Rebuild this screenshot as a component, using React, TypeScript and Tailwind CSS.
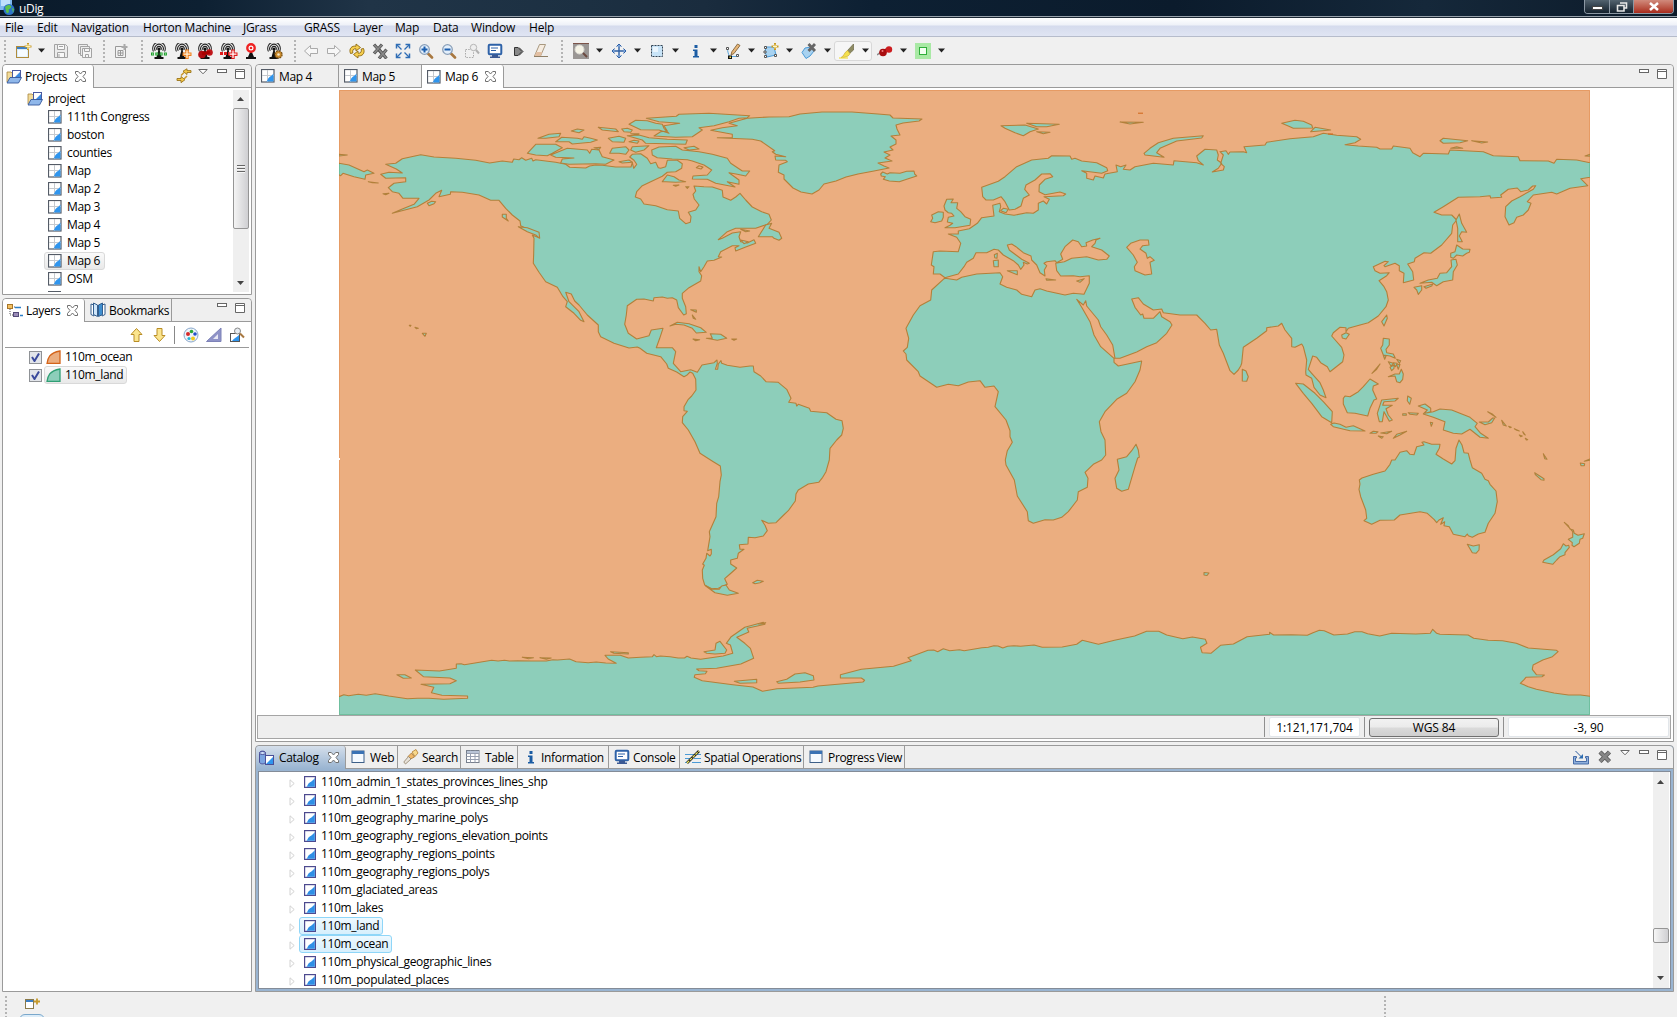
import React from "react";

/* ------------------------------------------------------------------ */
/* World map data: outlines digitised on local sheets                  */
/* ------------------------------------------------------------------ */

type SheetId = "N" | "S" | "E" | "A" | "O" | "F" | "T" | "P";
type Part = [SheetId, string];

const sheets: Record<SheetId, { ox: number; oy: number; sx: number; sy: number }> = {
  N: { ox: 339, oy: 85, sx: 3, sy: 3 },
  S: { ox: 640, oy: 340, sx: 3, sy: 3 },
  E: { ox: 890, oy: 100, sx: 3, sy: 3 },
  A: { ox: 1240, oy: 100, sx: 3, sy: 3 },
  O: { ox: 1240, oy: 330, sx: 3, sy: 3 },
  F: { ox: 880, oy: 260, sx: 3, sy: 3 },
  T: { ox: 339, oy: 590, sx: 1.2444, sy: 3 },
  P: { ox: 0, oy: 0, sx: 1, sy: 1 },
};

const toPath = (parts: Part[]) => {
  const out: string[] = [];
  for (const [id, pts] of parts) {
    const s = sheets[id];
    for (const p of pts.trim().split(/\s+/)) {
      const [x, y] = p.split(",").map(Number);
      out.push(`${(s.ox + x / s.sx).toFixed(1)} ${(s.oy + y / s.sy).toFixed(1)}`);
    }
  }
  return "M" + out.join("L") + "Z";
};

const continents: Part[][] = [
  [
    ["N", "125,268 150,262 190,264 172,252 140,238 170,235 190,221 245,209 285,216 350,220 410,226 452,234 490,228 520,232 524,222 540,224 548,218 560,226 578,220 582,228 590,224 650,232 680,238 692,247 740,249 752,243 770,240 790,241 830,246 876,246 880,232 884,250 893,238 885,226 872,216 880,208 905,206 925,220 935,236 950,232 958,248 965,250 980,245 985,226 1015,226 1030,236 1028,250 1010,260 985,262 970,274 935,290 910,302 893,320 889,336 905,342 915,357 950,362 985,374 1018,378 1022,400 1040,416 1054,412 1056,395 1048,382 1070,375 1080,360 1066,342 1062,328 1070,318 1065,303 1095,305 1120,306 1150,316 1152,336 1175,346 1190,336 1203,325 1220,345 1240,366 1268,380 1290,388 1297,405 1285,418 1250,430 1190,430 1165,440 1138,464 1150,460 1180,444 1205,440 1200,455 1205,470 1225,474 1245,464 1250,475 1220,486 1190,498 1188,488 1200,482 1180,482 1145,500 1138,515 1148,516 1125,526 1105,528 1095,545 1085,560 1080,545 1080,560 1088,572 1085,588 1050,608 1030,625 1030,640 1040,665 1042,686 1034,690 1018,668 1013,645 1000,638 985,640 970,636 945,638 943,648 915,642 893,643 865,662 862,690 857,718 868,745 893,762 930,752 937,735 972,730 962,760 952,788 1000,788 1010,800 1003,835 1025,860 1055,854"],
    ["S", "172,97 186,75 222,68 231,60 232,70 226,88 233,88 235,72 243,62 245,70 262,76 300,82 330,78 340,78 342,95 362,108 378,125 415,127 440,148 453,175 446,187 468,190 470,198 475,193 508,205 512,214 560,218 588,238 606,242 610,265 605,285 590,300 570,325 568,360 558,395 548,412 536,427 505,432 475,450 468,462 466,483 445,512 428,528 408,548 385,550 365,541 375,556 382,572 370,588 345,593 325,592 324,612 298,614 300,628 312,628 295,640 292,655 272,660 272,672 290,684 270,702 254,716 262,733 235,745 215,746 194,735 188,715 187,690 193,676 188,672 198,655 200,640 210,648 214,642 214,628 203,632 210,590 208,575 228,530 230,490 236,470 240,425 244,405 241,378 220,365 180,340 165,305 145,270 127,248 128,230 142,214 132,212 132,200 145,178 155,168 168,150 167,118 158,100 150,96 140,106 132,110 110,96 85,85 80,72 62,50 20,40 0,25"],
    ["N", "895,786 870,789 825,775 785,755 778,740 778,720 745,690 720,660 707,648 697,627 680,622 690,650 720,680 735,710 725,706 705,685 680,665 685,650 672,635 655,607 620,590 600,562 583,535 584,505 585,460 580,450 600,458 598,445 575,437 545,422 543,408 520,390 500,370 480,346 455,346 420,330 370,322 335,320 334,328 300,335 308,316 290,325 270,345 235,365 160,385 190,372 225,358 240,340 192,340 180,325 160,320 148,308 165,295 200,290 200,278 140,280"],
  ],
  [
    ["E", "165,533 150,522 130,522 132,500 124,495 130,455 150,453 205,455 212,430 200,412 175,402 205,402 205,393 238,386 262,370 275,353 312,348 308,316 330,310 332,320 328,335 345,342 372,346 410,338 430,340 445,330 445,310 460,303 470,312 478,298 462,290 520,287 527,282 510,276 465,284 447,275 448,255 465,238 488,230 480,221 455,222 435,240 408,255 404,268 418,285 400,295 393,318 375,328 358,330 345,305 333,290 310,300 288,300 278,290 275,262 325,244 345,230 380,200 425,180 475,175 485,167 540,168 545,178 555,175 575,183 620,188 650,203 653,212 635,220 575,212 590,220 590,235 610,240 615,228 640,234 645,222 682,215 678,195 692,200 708,195 700,208 720,210 735,200 790,190 850,195 852,182 920,188 940,195 925,182 920,168 945,148 980,150 985,165 982,180 995,190 985,205 967,216 1000,210 1003,200 992,190 1000,165 990,155 1008,152 1015,163 1020,156 1060,155 1070,158 1062,140 1125,135 1130,127 1200,116"],
    ["A", "220,110 250,100 290,106 350,110 362,118 345,128 315,134 355,138 410,142 420,147 455,147 460,138 510,145 518,158 540,170 550,160 625,162 630,150 730,155 760,167 835,170 840,182 925,183 942,190 950,178 1010,180 1050,188 1050,232 1022,236 1043,257 990,265 950,282 935,277 880,285 862,305 873,310 865,330 850,345 830,352 822,368 807,375 795,350 797,320 815,303 840,290 880,268 887,257 878,258 865,270 842,275 832,264 805,268 782,285 785,292 752,294 750,287 720,290 655,292 610,320 582,337 605,345 635,345 650,360 638,375 635,400 605,435 572,460 552,458 525,475 523,485 503,492 518,515 521,540 490,548 492,520 478,512 478,497 465,490 435,500 432,497 445,485 435,484 400,500 405,512 420,520 448,518 440,527 417,542 432,560 440,575 445,600 438,620 415,648 385,668 360,675 325,685 318,695 318,683 300,682 280,698 275,708 305,742 312,765 308,785 270,815 262,800 242,788 230,772 218,768 205,808 215,820 240,848 250,870 258,893 240,885 222,862 215,835 198,825 197,815 200,780 190,740 185,732 165,742 155,740 155,715 135,690 125,670 115,678 80,683 80,692 50,715 10,742 5,790"],
    ["E", "1052,798 1045,810 1032,823 1020,812 1000,760 988,735 980,688 962,690 945,670 920,645 870,645 820,638 815,627 790,630 760,612 745,593 725,597 735,622 752,645 758,642 762,655 790,655 810,635 815,650 840,665 846,675 830,700 800,728 770,740 740,756 690,775 675,775 668,735 650,705 632,680 625,660 590,618 587,602 580,615 560,598 575,622 600,665 612,705 632,740 672,775 672,787 685,798 755,783 750,810 735,845 710,880 680,898"],
    ["F", "675,455 658,485 663,515 675,540 677,585 665,600 640,613 615,637 624,655 622,682 595,695 592,720 565,755 545,772 520,780 495,779 460,790 445,782 442,755 412,708 403,660 378,615 376,600 382,572 397,547 390,530 390,512 378,480 345,440 355,395 342,378 315,382 300,362 265,366 235,377 205,373 170,382 120,348 115,335 80,300 78,282 70,273 82,262 86,235 78,205 100,165 120,137 152,120 155,90 190,58"],
    ["E", "165,535 200,540 215,532 260,522 330,518 338,530 330,552 350,562 380,570 395,583 425,590 435,570 450,566 470,573 525,585 550,580 582,583 598,550 598,527 570,530 550,527 512,528 500,512 497,490 523,485 545,475 590,470 625,480 650,478 658,468 635,450 605,440 615,430 618,420 630,415 608,420 588,428 590,438 575,440 565,425 548,420 525,440 512,462 518,478 500,488 495,482 470,485 462,490 470,497 463,510 465,528 450,518 440,495 425,480 423,468 400,458 378,440 365,432 352,435 358,450 375,463 395,478 418,490 412,492 400,487 402,495 392,508 385,495 370,482 340,465 325,450 312,448 290,458 258,458 250,475 230,487 222,500 205,522 175,530"],
  ],
  [
    ["T", "0,320 6,314 12,317 24,313 34,316 45,311 62,318 85,326 98,325 112,325 130,328 160,325 160,318 128,316 115,308 118,292 102,283 138,281 146,272 138,264 105,260 95,240 125,243 146,235 146,222 152,221 156,224 190,211 198,213 206,211 212,213 222,212 240,213 258,213 266,209 272,210 287,207 295,215 310,218 320,216 332,219 345,220 335,207 331,196 350,196 360,204 375,202 390,200 392,194 395,200 400,198 412,200 422,204 430,204 433,199 438,204 450,208 478,198 490,190 487,165 482,160 488,140 505,112 528,97 530,103 508,115 510,126 495,142 505,160 512,175 516,205 500,222 470,235 445,237 448,242 458,244 456,251 443,254 442,262 452,272 490,284 515,291 527,304 545,296 590,292 596,288 652,276 654,271 650,264 624,264 624,254 650,238 690,229 712,212 708,203 733,181 740,180 745,185 752,176 760,182 772,179 778,182 800,173 808,172 815,167 820,168 826,174 832,169 840,167 848,169 865,165 875,172 900,171 918,163 925,151 945,163 965,151 990,138 1005,124 1020,124 1030,135 1050,146 1062,141 1078,148 1080,160 1072,172 1074,188 1085,190 1097,166 1113,162 1130,140 1158,133 1158,127 1163,135 1185,134 1205,136 1212,128 1220,121 1226,122 1238,135 1255,132 1264,125 1273,125 1280,131 1295,138 1310,130 1340,132 1358,130 1361,118 1366,130 1370,133 1405,135 1412,145 1430,151 1448,152 1465,160 1480,174 1515,181 1517,185 1510,200 1498,210 1486,225 1485,238 1490,254 1500,255 1497,260 1477,262 1475,268 1470,280 1480,290 1490,298 1512,309 1530,315 1545,315 1557,319 1557,378 0,378"],
  ],
];

const islands: Part[][] = [
  [["N", "1115,136 1150,128 1195,122 1170,115 1225,100 1290,96 1350,95"], ["P", "800,114 822,112 852,112 878,114 890,115 893,118 922,119 919,121 903,123 896,125 897,129 900,135 891,136 896,140 896,144 890,147 893,150 884,152 890,155 885,158 892,161 878,163 884,166 889,168 874,171 858,174 846,177 836,181 824,184 819,190 812,194 801,192 793,188 789,184"], ["N", "1335,282 1335,270 1318,262 1320,240 1345,230 1340,226 1310,225 1308,213 1340,215 1310,208 1300,200 1307,197 1265,168 1240,163 1135,158 1180,158 1180,148"]],
  [["E", "-28,222 -22,216 -8,222 0,218 30,220 50,214 72,213 74,222 80,228 50,238 28,245 -2,243 -20,238 -14,230 -26,228"]],
  [["N", "538,425 565,428 600,442 602,460 590,450 565,440"]],
  [["N", "490,388 502,388 502,400 508,408 490,396"]],
  [["N", "265,355 278,349 290,350 285,356 270,362"]],
  [["N", "0,208 25,210 0,213"]],
  [["N", "88,290 118,294 100,293"]],
  [["N", "132,326 150,325 140,329"]],
  [["N", "0,235 30,240 75,260 85,255 105,265 80,270 78,283 45,275 12,265 5,272 0,270"]],
  [["N", "1258,455 1280,420 1298,415 1290,430 1320,442 1328,460 1320,466 1305,460 1300,455"]],
  [["N", "1205,433 1232,438 1220,440"]],
  [["N", "1205,465 1228,470 1215,476"]],
  [["N", "565,205 590,178 650,178 670,188 640,205 625,212 590,210"]],
  [["N", "635,210 685,190 745,195 752,205 758,193 780,195 790,215 825,225 800,238 770,236 690,238 665,234 670,222 705,219 650,217"]],
  [["N", "597,160 630,148 665,145 660,155 620,160"]],
  [["N", "650,170 668,157 715,160 730,163 735,155 755,160 775,165 755,172 700,177 690,170"]],
  [["N", "697,138 715,132 735,135 720,143"]],
  [["N", "808,160 840,154 860,160 855,172 820,170"]],
  [["N", "778,127 830,132 838,140 790,135"]],
  [["N", "848,132 865,130 880,135 875,142 855,140"]],
  [["N", "820,190 860,185 870,195 860,208 840,205 812,205"]],
  [["N", "765,188 785,187 780,193"]],
  [["N", "870,118 890,106 925,107 950,115 970,118 975,130 990,145 960,135 905,134"]],
  [["N", "875,146 900,146 890,149"]],
  [["N", "922,100 1012,94 1020,88 1110,85 1232,92 1225,98 1200,100 1170,110 1125,122 1080,128 1090,135 1060,155 1010,157 945,153 965,140 985,138 975,122 1022,115 960,110"]],
  [["N", "865,152 900,150 930,158 985,163 1045,165 1040,178 920,175 910,165"]],
  [["N", "870,170 885,166 900,168 895,175"]],
  [["N", "880,185 930,182 915,195 890,202 875,195"]],
  [["N", "840,230 870,225 880,232 850,234"]],
  [["N", "938,195 960,186 1010,184 1030,195 1080,200 1120,208 1165,220 1175,235 1210,258 1232,258 1220,273 1195,268 1170,263 1200,285 1200,298 1165,290 1188,306 1130,295 1105,283 1060,282 1062,273 1105,270 1118,255 1095,240 1060,228 1045,224 1000,222 955,218 940,210"]],
  [["N", "1035,188 1065,184 1080,192 1050,195"]],
  [["N", "970,290 985,270 1005,275 1020,285 1040,290 1010,292 980,290"]],
  [["N", "1003,301 1020,300 1010,304"]],
  [["N", "1040,305 1050,305 1045,310"]],
  [["N", "993,723 1015,712 1050,716 1085,728 1102,742 1072,744 1060,730 1035,720 1010,718"]],
  [["N", "1102,760 1120,760 1114,746 1145,748 1163,760 1135,766"]],
  [["N", "1062,762 1082,764 1070,767"]],
  [["N", "1178,762 1193,762 1185,766"]],
  [["N", "1055,674 1072,675 1072,682"]],
  [["N", "1060,690 1070,703 1063,700"]],
  [["N", "250,745 262,745 258,754"]],
  [["N", "228,727 238,730 232,731"]],
  [["N", "211,721 216,721 214,724"]],
  [["S", "197,738 215,748 238,748 245,738 258,735 268,750 295,760 262,766 225,758"]],
  [["S", "338,728 352,721 370,724 360,728 345,731"]],
  [["S", "192,935 225,930 228,910 240,904 260,930 255,940 225,942 200,940"]],
  [["S", "283,1024 350,1018 350,1028 300,1030"]],
  [["S", "410,1025 440,1018 465,1002 495,998 520,1007 522,1020 480,1026 415,1030"]],
  [["S", "355,852 377,848 370,853"]],
  [["T", "72,254 82,254 90,264 80,265"]],
  [["T", "338,185 360,188 360,192 342,190"]],
  [["T", "228,202 242,203 236,206"]],
  [["T", "250,203 264,204 258,208"]],
  [["E", "165,383 180,376 188,370 172,366 175,352 192,348 185,340 175,338 165,330 162,318 170,298 190,297 183,308 203,308 200,325 212,335 225,350 242,358 240,376 195,383"]],
  [["E", "122,365 128,355 125,345 145,335 160,337 160,352 155,363 135,368"]],
  [["E", "332,332 340,325 355,328 348,338"]],
  [["E", "313,464 322,460 321,475 314,473"]],
  [["E", "310,482 325,480 325,500 312,500"]],
  [["E", "352,512 382,512 382,524"]],
  [["E", "468,536 497,540 470,541"]],
  [["E", "560,543 583,536 570,547"]],
  [["E", "333,77 405,75 445,87 420,95 400,107 375,98 345,85"]],
  [["E", "410,70 508,73 470,80 440,80"]],
  [["E", "440,95 480,97 460,101"]],
  [["E", "690,66 760,67 720,72"]],
  [["E", "762,160 780,145 805,128 850,115 940,107 935,114 860,123 810,145 800,158 822,172 765,165"]],
  [["E", "1057,808 1068,813 1075,830 1070,844 1057,843"]],
  [["A", "125,70 165,61 190,64 215,75 218,84 160,85 145,78"]],
  [["A", "212,95 225,82 272,90"]],
  [["A", "600,122 610,115 683,122 660,128 610,130"]],
  [["A", "695,122 743,126 725,129"]],
  [["A", "632,145 650,140 668,145"]],
  [["A", "1035,168 1050,163 1050,169"]],
  [["A", "648,360 658,342 665,370 680,397 665,395 658,408 667,425 653,425 653,385"]],
  [["A", "632,460 645,455 650,435 668,447 690,448 688,457 680,460 668,468 650,465 640,475 632,472"]],
  [["A", "540,550 565,540 592,535 600,520 620,518 635,500 633,480 648,478 652,495 640,515 638,540 610,545 590,557 575,547"]],
  [["A", "522,562 545,557 545,570 535,583 530,570"]],
  [["A", "552,560 578,552 575,558 558,565"]],
  [["A", "425,665 440,645 442,655 432,678"]],
  [["A", "305,705 318,698 328,703 318,717 307,714"]],
  [["A", "430,715 448,717 448,735 438,748 440,758 460,762 466,775 450,768 430,765 422,745 428,735"]],
  [["A", "396,820 420,792 410,808"]],
  [["A", "430,766 438,768 434,778"]],
  [["A", "445,785 460,790 453,798"]],
  [["A", "460,788 472,790 466,800"]],
  [["A", "470,778 482,782 478,790"]],
  [["A", "450,802 462,795 462,805 455,812"]],
  [["A", "445,830 465,822 478,822 484,808 490,822 488,838 480,848 470,845 465,828"]],
  [["A", "470,795 480,793 475,808"]],
  [["O", "167,160 190,162 225,190 250,215 277,245 275,278 245,260 215,220 190,190"]],
  [["O", "310,205 315,198 330,200 355,185 370,170 390,147 415,162 400,168 398,180 410,207 402,210 390,235 383,258 345,250 322,248 310,222"]],
  [["O", "272,283 282,279 300,283 318,292 340,287 375,303 330,302 280,290"]],
  [["O", "390,310 400,304 414,305 408,310"]],
  [["O", "422,309 455,304 440,311"]],
  [["O", "415,318 430,320 425,325"]],
  [["O", "460,325 470,313 500,304 480,315"]],
  [["O", "412,250 425,210 475,205 465,213 432,215 428,226 457,226 438,236 445,255 457,270 448,274 432,245 427,275 418,275"]],
  [["O", "503,198 514,205 509,223 502,212"]],
  [["O", "488,251 499,251 499,256 488,256"]],
  [["O", "505,248 535,250 530,255 510,253"]],
  [["O", "571,277 578,278 574,289"]],
  [["O", "535,228 555,222 572,235 572,245 555,250 580,245 600,237 635,240 690,262 712,280 705,290 722,310 745,325 720,322 690,298 665,312 640,310 610,300 615,275 580,262 550,252 562,240"]],
  [["O", "718,276 745,276 758,264 764,264 755,278 735,284"]],
  [["O", "743,245 768,262 758,253"]],
  [["O", "785,271 799,288 790,285"]],
  [["O", "806,289 814,292 810,293"]],
  [["O", "823,296 838,303 830,301"]],
  [["O", "838,315 847,318 842,320"]],
  [["O", "848,305 856,315 851,311"]],
  [["O", "856,325 863,329 859,330"]],
  [["O", "910,371 921,388 914,386"]],
  [["O", "884,428 912,446 912,451 903,449 886,434"]],
  [["O", "1021,399 1034,401 1033,407 1023,407"]],
  [["O", "1033,394 1050,387 1050,391"]],
  [["O", "358,450 366,444 400,433 435,423 450,403 455,390 465,390 480,367 500,362 510,373 522,374 530,350 552,345 546,337 552,335 575,343 600,343 598,355 588,373 610,387 635,402 645,392 648,355 657,330 666,345 672,368 685,370 690,390 697,413 725,430 735,448 745,452 750,463 768,483 772,515 765,550 745,580 735,607 715,612 697,622 685,617 682,612 675,620 640,613 628,590 612,587 614,575 602,583 610,563 597,570 590,578 582,568 562,550 540,545 480,555 463,570 420,571 395,583 372,572 380,565 377,540 362,500 357,478 360,462"]],
  [["O", "682,643 700,648 718,644 717,660 708,670 697,668"]],
  [["O", "973,577 985,587 990,597 1000,600 1003,610 1014,616 1033,611 1028,625 1020,628 1018,640 1002,650 996,646 997,638 985,628 998,622 998,605 985,590"]],
  [["O", "970,641 978,648 986,646 988,652 975,668 975,674 960,680 950,690 938,703 908,697 912,690 940,674 962,656"]],
  [["F", "768,553 775,570 778,592 773,594 765,620 745,688 725,694 710,685 705,655 717,630 712,598 740,590 755,572"]],
  [["P", "1204,572.5 1209,573 1207,575.500 1204,575"]],
];

const lakes: Part[][] = [
  [["E", "775,420 750,420 722,430 710,442 730,465 742,487 733,500 735,512 765,525 785,522 782,500 780,487 793,481 780,470 772,475 768,460 750,447 758,437 777,435"]],
  [["N", "1072,248 1080,242 1092,246 1086,252"]],
];

const continentPath = continents.map(toPath).join("");
const islandPath = islands.map(toPath).join("");
const lakePath = lakes.map(toPath).join("");

function WorldMap() {
  return (
    <svg className="block h-[625px] w-[1251px]" viewBox="339 90 1251 625">
      <rect x="339" y="90" width="1251" height="625" fill="#ebae80" />
      <path d="M339.5 715V90.5H1589.5V715" fill="none" stroke="#e69b64" />
      <g fill="#8dceba" stroke="#b3803a" strokeWidth="1.100" strokeLinejoin="round">
        <path d={continentPath} />
        <path d={islandPath} />
        <path d={lakePath} fill="#ebae80" />
      </g>
      <path d="M1138 113.200H1143" stroke="#cf6418" />
      <path d="M1262 124.500H1267" transform="translate(66 9.500)" stroke="#cf6418" />
      <path d="M339.5 697V714.5H1589.5V697M1589.5 163V177M339.5 164V174" fill="none" stroke="#6fbf9f" />
      <rect x="339" y="458" width="1" height="2" fill="#fff" />
    </svg>
  );
}

/* ------------------------------------------------------------------ */
/* Icons                                                               */
/* ------------------------------------------------------------------ */

const Ico = ({ children, w = 16, h = 16 }: { children: React.ReactNode; w?: number; h?: number }) => (
  <svg width={w} height={h} viewBox={`0 0 ${w} ${h}`} className="block shrink-0">
    {children}
  </svg>
);

const IcoNew = () => (
  <Ico>
    <rect x="0.5" y="3.5" width="12" height="11" fill="#d8ecfb" stroke="#b08c3c" />
    <rect x="2" y="7" width="9" height="6.500" fill="#f6fbff" />
    <path d="M1 4h11v2H1z" fill="#3d7fc4" />
    <path d="M12 0v7M8.500 3.500h7" stroke="#c69a2c" strokeWidth="2" />
    <path d="M12 1v5M9.500 3.500h5" stroke="#fff3b0" />
  </Ico>
);
const IcoSave = () => (
  <Ico>
    <path d="M1.500 1.500h11l2 2v11h-13z" fill="#ececec" stroke="#a3a3a3" />
    <path d="M4.500 1.500h7v5h-7zM4.500 14v-4.500h7V14" fill="#f8f8f8" stroke="#a3a3a3" />
    <path d="M6 3.500h4M6 11v3" stroke="#a3a3a3" />
  </Ico>
);
const IcoSaveAll = () => (
  <Ico>
    <path d="M1.500 1.500h9v9h-9z" fill="#ececec" stroke="#a3a3a3" />
    <path d="M3.500 3.500h9v9h-9z" fill="#ececec" stroke="#a3a3a3" />
    <path d="M5.500 5.500h9v9h-9z" fill="#f4f4f4" stroke="#a3a3a3" />
    <path d="M7.500 6v2.500h5V6M8.500 14v-2.500h3V14" fill="none" stroke="#a3a3a3" />
  </Ico>
);
const IcoWizard = () => (
  <Ico>
    <path d="M2.500 3.500h10v11h-10z" fill="#f3f3f3" stroke="#999" />
    <path d="M5 7.500h5v5H5zM5 10h5M7.500 7.500v5" fill="none" stroke="#999" />
    <path d="M11.500 1v6M8.500 4h6" stroke="#aaa" strokeWidth="2" />
  </Ico>
);
const Antenna = ({ children }: { children?: React.ReactNode }) => (
  <Ico w={18}>
    <path d="M2.500 8.500a6.300 6.300 0 1 1 11 0" fill="none" stroke="#333" strokeWidth="1.100" />
    <path d="M4.300 7.800a4.300 4.300 0 1 1 7.400 0M6 6.800a2.300 2.300 0 1 1 4 0" fill="none" stroke="#222" strokeWidth="1.100" />
    <path d="M8 5l3 11H5z" fill="#111" />
    <circle cx="8" cy="6" r="1.600" fill="#111" />
    <path d="M3.500 14h9v2h-9z" fill="#111" />
    {children}
  </Ico>
);
const IcoAnt1 = () => (
  <Antenna>
    <path d="M0 11h16" stroke="#1e9e2c" strokeWidth="3" strokeDasharray="3 1.300" />
    <path d="M1 11h14" stroke="#c8f5cc" strokeDasharray="1.300 3" />
  </Antenna>
);
const IcoAnt2 = () => (
  <Antenna>
    <path d="M13 6.500v9.500M8.500 11.200h9" stroke="#ef7d18" strokeWidth="3.400" />
    <path d="M13 7.500v7.500M9.500 11.200h7" stroke="#fff1d8" strokeWidth="1.300" />
  </Antenna>
);
const IcoAnt3 = () => (
  <Antenna>
    <circle cx="5" cy="11.500" r="3.800" fill="#b10d12" />
    <circle cx="12.500" cy="9.500" r="3.300" fill="#c0181c" />
    <path d="M5 11l8-2" stroke="#a00" strokeWidth="3" />
  </Antenna>
);
const IcoAnt4 = () => (
  <Antenna>
    <path d="M0 10.500h9" stroke="#e01b1b" strokeWidth="3" strokeDasharray="3 1" />
    <path d="M13 6.500v9.500M8.500 11.200h9" stroke="#df1a1a" strokeWidth="3.400" />
    <path d="M13 7.500v7.500M9.500 11.200h7" stroke="#fff" strokeWidth="1.300" />
  </Antenna>
);
const IcoAnt5 = () => (
  <Ico w={18}>
    <path d="M8 7l3 7h2v2H3v-2h2z" fill="#111" />
    <circle cx="8" cy="5" r="3.700" fill="#fff" stroke="#e22" strokeWidth="2.400" />
    <circle cx="8" cy="5" r="1.300" fill="#e22" />
  </Ico>
);
const IcoAnt6 = () => (
  <Antenna>
    <circle cx="12.500" cy="11.500" r="3.600" fill="#c98a2c" stroke="#7a5216" strokeWidth="1.300" strokeDasharray="1.800 1" />
    <circle cx="12.500" cy="11.500" r="1.300" fill="#f6e8c8" />
  </Antenna>
);
const IcoBack = ({ flip = false }: { flip?: boolean }) => (
  <Ico>
    <path d={flip ? "M14.500 8l-6-5.500v3h-7v5h7v3z" : "M1.500 8l6-5.500v3h7v5h-7v3z"} fill="#f7f7f7" stroke="#aaa" />
  </Ico>
);
const IcoRefresh = () => (
  <Ico>
    <path d="M1.500 10.500C-.5 5.500 3 2.500 7 3.200V1l4.500 3.500L7 8V5.800C4.500 5.500 3 7 3.800 10z" fill="#f6cf50" stroke="#8f6a10" strokeWidth="0.900" />
    <path d="M14.500 5.500c2 5-1.500 8-5.500 7.300V15l-4.500-3.500L9 8v2.200c2.500.3 4-1.200 3.200-4.200z" fill="#f6cf50" stroke="#8f6a10" strokeWidth="0.900" />
  </Ico>
);
const IcoDelete = () => (
  <Ico>
    <path d="M2 1.500l8 9M10 1.500L2 10.500" stroke="#555" strokeWidth="3.200" />
    <path d="M2.300 1.900l7.400 8.200M9.700 1.900L2.300 10.100" stroke="#8a8a8a" strokeWidth="1.500" />
    <path d="M7 6.500l7.500 9M14.500 6.500L7 15.500" stroke="#555" strokeWidth="3.200" />
    <path d="M7.300 6.900l6.900 8.200M14.200 6.900L7.300 15.100" stroke="#8a8a8a" strokeWidth="1.500" />
  </Ico>
);
const IcoExtent = () => (
  <Ico>
    <path d="M1.500 5.500v-4h4M10.500 1.500h4v4M14.500 10.500v4h-4M5.500 14.500h-4v-4" fill="none" stroke="#2f6db5" strokeWidth="1.500" />
    <path d="M2 2l4.500 4.500M14 2L9.500 6.500M14 14L9.500 9.500M2 14l4.500-4.500" stroke="#2f6db5" strokeWidth="1.300" />
  </Ico>
);
const IcoZoom = ({ plus }: { plus: boolean }) => (
  <Ico>
    <path d="M9.500 10l4.500 4.500" stroke="#a87840" strokeWidth="2.600" strokeLinecap="round" />
    <circle cx="6.500" cy="6.500" r="4.800" fill="#e3effb" stroke="#8a9fb8" strokeWidth="1.300" />
    <path d={plus ? "M3.500 6.500h6M6.500 3.500v6" : "M3.500 6.500h6"} stroke="#1d5fae" strokeWidth="2" />
  </Ico>
);
const IcoZoomBox = () => (
  <Ico>
    <path d="M1.500 6.500h8v8h-8z" fill="none" stroke="#aaa" strokeDasharray="1.500 1.200" />
    <circle cx="9.500" cy="4.500" r="3.200" fill="#eee" stroke="#b5b5b5" />
    <path d="M12 7l3 3.500" stroke="#b0b0b0" strokeWidth="2" />
  </Ico>
);
const IcoConsole = () => (
  <Ico>
    <rect x="1.700" y="1.700" width="12.600" height="9.600" rx="1" fill="#fff" stroke="#2e62a8" strokeWidth="2" />
    <path d="M4 5h7M4 7.500h5" stroke="#2e62a8" />
    <path d="M5 11.500h6v2H5zM3 13.500h10v1.500H3z" fill="#3c5a94" />
  </Ico>
);
const IcoTag = () => (
  <Ico w={12}>
    <path d="M1.500 4.500h3.500l4 4-4 4H1.500z" fill="#888" stroke="#333" />
    <path d="M6 4.500l4 4-4 4" fill="none" stroke="#333" />
  </Ico>
);
const IcoEraser = () => (
  <Ico>
    <path d="M6.500 1.500h6L7.500 13H1.500z" fill="#f6ece0" stroke="#a8987f" />
    <path d="M3.300 9h6l-1.800 4.500H1.500z" fill="#e3bfa2" />
    <path d="M1 13.500h14" stroke="#8f7f66" />
  </Ico>
);
const IcoMag = () => (
  <Ico>
    <rect width="16" height="16" fill="#9a9694" />
    <path d="M0 .5h16" stroke="#7c5348" />
    <circle cx="6.500" cy="6.500" r="4.500" fill="#f5f3e6" stroke="#d8d6d0" />
    <path d="M10 10l4 4" stroke="#6b4a40" strokeWidth="2" />
  </Ico>
);
const IcoPan = () => (
  <Ico>
    <path d="M8 1.500v13M1.500 8h13" stroke="#2d5fa4" strokeWidth="1.400" />
    <path d="M5.500 3.500L8 1l2.500 2.500M5.500 12.500L8 15l2.500-2.500M3.500 5.500L1 8l2.500 2.500M12.500 5.500L15 8l-2.500 2.500" fill="#7aa4dc" stroke="#2d5fa4" />
  </Ico>
);
const IcoSelect = () => (
  <Ico>
    <rect x="2.500" y="2.500" width="11" height="11" fill="#c8e4f8" stroke="#345" strokeDasharray="2 1" />
    <rect x="4" y="4" width="5" height="5" fill="#eaf5fd" />
  </Ico>
);
const IcoInfo = () => (
  <Ico w={10}>
    <path d="M3.500 2h3v3h-3zM2 6.500h4.500V13H8v1.500H2V13h1.500V8H2z" fill="#1b5ca3" />
  </Ico>
);
const IcoEdit = () => (
  <Ico>
    <path d="M2.500 5c0 4 1 6 2 8.500M5 13.500h7" fill="none" stroke="#5aa6dc" />
    <path d="M12.500 1l2.500 1.500-6 8-3 1.500.8-3.200z" fill="#e7b77a" stroke="#75552c" strokeWidth="0.800" />
    <path d="M1.500 4.500h2v2h-2zM11.500 11.500h2v2h-2z" fill="#fff" stroke="#555" />
    <path d="M3 12.500h4v3.500H3z" fill="#111" />
    <path d="M4.500 13.500h1.500v1.500H4.500z" fill="#ffe84a" />
  </Ico>
);
const IcoPoly = () => (
  <Ico>
    <path d="M3 4h8l2 8-9 2-2-5z" fill="#a8d2f0" stroke="#4a9ad6" />
    <path d="M1.500 3.500h2v2h-2zM1.500 12.500h2v2h-2zM11.500 11.500h2v2h-2zM1 8h2v2H1z" fill="#fff" stroke="#555" />
    <path d="M12 0v7M8.500 3.500h7" stroke="#c89a20" strokeWidth="2" />
    <path d="M12 1.500v4M10 3.500h4" stroke="#fff6c0" />
  </Ico>
);
const IcoPolyDel = () => (
  <Ico>
    <path d="M4 5l6-1 3 4-4 5-4 2.500-4-6z" fill="#a8d2f0" stroke="#4a9ad6" />
    <path d="M7.500 1l6.500 7M14 1L7.500 8" stroke="#666" strokeWidth="2.800" />
  </Ico>
);
const IcoBrush = () => (
  <Ico>
    <path d="M14.500 1v6l-4 3.500-2-3z" fill="#8f8c62" stroke="#6b6848" strokeWidth="0.700" />
    <path d="M8.500 7.500l2.500 3c-1 3-5 4-9 4 3-1 3-5 6.500-7z" fill="#f4e04c" stroke="#c7a93a" strokeWidth="0.700" />
    <path d="M0 15h9" stroke="#f0d820" />
  </Ico>
);
const IcoPins = () => (
  <Ico>
    <path d="M0 12l4-3" stroke="#888" strokeWidth="1.500" />
    <circle cx="6" cy="9.500" r="3.800" fill="#a80d10" />
    <path d="M6 9l6-3" stroke="#a80d10" strokeWidth="4" />
    <circle cx="12" cy="6.500" r="3.200" fill="#cc1c1f" />
    <circle cx="5.500" cy="8" r="1" fill="#f08080" />
  </Ico>
);
const IcoGreen = () => (
  <Ico>
    <rect width="16" height="16" fill="#a9e9a5" />
    <rect x="4.500" y="4.500" width="7" height="7" fill="#f3fff2" stroke="#2fae3a" />
  </Ico>
);
const Caret = () => (
  <svg width="8" height="5" viewBox="0 0 8 5" className="block shrink-0">
    <path d="M0 .5h7L3.500 4.500z" fill="#222" />
  </svg>
);

const IcoMap = () => (
  <svg width="14" height="14" viewBox="0 0 14 14" className="block shrink-0">
    <rect x="0.500" y="0.500" width="12.500" height="12.500" fill="#fff" stroke="#545b66" strokeWidth="1.200" />
    <path d="M6.500 1v12M1 6.500h12" stroke="#c5c9ce" />
    <path d="M5 12.500c2-1 1.500-2.500 3-4s2.500-1.500 4.500-4v8z" fill="#2f95ee" />
  </svg>
);
const IcoShp = () => (
  <svg width="12" height="12" viewBox="0 0 12 12" className="block shrink-0">
    <rect x="0.600" y="0.600" width="10.800" height="10.800" fill="#fff" stroke="#4d4a8f" strokeWidth="1.200" />
    <path d="M2.500 10.800c1.500-1 1-3 2.800-4s2.700-1.300 5.500-4.800v8.800z" fill="#2f8fe6" />
  </svg>
);
const IcoProject = () => (
  <Ico>
    <path d="M1 3h4l1 1h4v9H1z" fill="#f3dc9a" stroke="#a8873c" strokeWidth="0.800" />
    <rect x="6.500" y="1.500" width="8" height="8" fill="#fff" stroke="#4a5aa0" />
    <path d="M8 9l6-6v6z" fill="#3c8ae0" />
    <path d="M4 8.500h11.500L12.500 14H1z" fill="#8fb7ea" stroke="#34589c" strokeWidth="0.900" />
  </Ico>
);
const IcoLayers = () => (
  <Ico>
    <path d="M3 6v6h4M3 4h5" fill="none" stroke="#555" strokeDasharray="1 1" />
    <rect x="0.500" y="1.500" width="5" height="4" fill="#f4c163" stroke="#a8772a" />
    <rect x="6.500" y="9.500" width="5" height="4" fill="#9b8db8" stroke="#544a78" />
    <path d="M8 4.500h6M13 12.500h3" stroke="#2d7fc8" strokeWidth="1.500" />
  </Ico>
);
const IcoBookmarks = () => (
  <Ico>
    <path d="M1 2l3 1v11l-3-1.500zM15 2l-3 1v11l3-1.500z" fill="#fff" stroke="#345e8e" />
    <path d="M3.500 1l4 2v11.500l-4-2z" fill="#cfe6fa" stroke="#345e8e" />
    <path d="M12.500 1l-4 2v11.500l4-2z" fill="#3f8fd0" stroke="#345e8e" />
  </Ico>
);
const IcoClose = () => (
  <svg width="11" height="11" viewBox="0 0 11 11" className="block shrink-0">
    <path d="M.5.500h2.800l2.200 2.500L7.700.5h2.800v2L8 5.500l2.500 3v2H7.700L5.500 8l-2.200 2.500H.5v-2l2.500-3-2.500-3z" fill="#fff" stroke="#6f6f6f" />
  </svg>
);
const IcoLink = () => (
  <Ico>
    <path d="M15 4.500h-4v2L7 3.200 11 .8v1.800h4zM1 10.500h4v-2l4 3.200-4 3V12.500H1z" fill="#f3c747" stroke="#9a741c" strokeWidth="0.900" />
    <path d="M5 7.500l3-3M11 8l-3 3" stroke="#c8982c" strokeWidth="1.500" />
  </Ico>
);
const IcoMenuTri = () => (
  <svg width="10" height="6" viewBox="0 0 10 6" className="block shrink-0">
    <path d="M.8.500h8.400L5 4.800z" fill="#fff" stroke="#666" />
  </svg>
);
const IcoMin = () => (
  <svg width="10" height="5" viewBox="0 0 10 5" className="block shrink-0">
    <rect x="0.500" y="0.500" width="9" height="3" fill="#fff" stroke="#666" />
  </svg>
);
const IcoMax = () => (
  <svg width="11" height="11" viewBox="0 0 11 11" className="block shrink-0">
    <path d="M.5.500h9v9h-9zM.5 2.500h9" fill="#fff" stroke="#666" />
  </svg>
);
const IcoUp = ({ down = false }: { down?: boolean }) => (
  <Ico w={13}>
    <path d={down ? "M6.500 14.500L1 8.500h3v-7h5v7h3z" : "M6.500 1.500L1 7.500h3v7h5v-7h3z"} fill="#fbe58e" stroke="#b98d25" />
  </Ico>
);
const IcoPalette = () => (
  <Ico>
    <circle cx="8" cy="8" r="7" fill="#eef4fb" stroke="#8aa8cc" />
    <circle cx="5" cy="7" r="2" fill="#d62a2a" />
    <circle cx="8.500" cy="4.500" r="1.800" fill="#2aa838" />
    <circle cx="12" cy="7" r="1.800" fill="#2450c8" />
    <circle cx="10" cy="11.500" r="2" fill="#f0c820" />
    <circle cx="6" cy="11.500" r="1.600" fill="#26b4d8" />
  </Ico>
);
const IcoTriangle = () => (
  <Ico>
    <path d="M15 1v13.500H.5z" fill="#8f93c8" stroke="#7d82b8" />
    <path d="M12 7v5H7z" fill="#e8e8f4" />
  </Ico>
);
const IcoZoomLayer = () => (
  <Ico>
    <rect x="1.500" y="6.500" width="9" height="8" fill="#fff" stroke="#555" />
    <path d="M3 14c2-3 4-3 7-6v6z" fill="#2f95ee" />
    <circle cx="8.500" cy="4" r="3" fill="#e8edf2" stroke="#888" />
    <path d="M11 6.500l4 4" stroke="#a87840" strokeWidth="2" />
  </Ico>
);
const IcoCatalog = () => (
  <Ico>
    <path d="M.5 3c0-2.500 6-2.500 6 0v9c0 2.500-6 2.500-6 0z" fill="#7ba4e0" stroke="#4a4f98" />
    <ellipse cx="3.500" cy="3" rx="3" ry="1.500" fill="#cfe0f8" stroke="#4a4f98" />
    <rect x="6.500" y="5.500" width="8" height="9" fill="#fff" stroke="#4a4f98" />
    <path d="M7 14l7-7v7z" fill="#2f95ee" />
  </Ico>
);
const IcoWindow = () => (
  <Ico w={14}>
    <rect x="1" y="2" width="12" height="11.500" fill="#f5faff" stroke="#3c5f88" />
    <path d="M1 2h12v3H1z" fill="#3a72b4" />
  </Ico>
);
const IcoTorch = () => (
  <Ico>
    <path d="M9 3l4-2.500 2 3.500-3 3.500z" fill="#f8d98c" stroke="#b07c30" strokeWidth="0.800" />
    <path d="M8.500 4l3 4-4 2L5 7.500z" fill="#f0b868" stroke="#a87838" strokeWidth="0.800" />
    <path d="M5.500 7.500L8 10l-5.500 5L.8 13z" fill="#e7e2da" stroke="#8f7f66" strokeWidth="0.800" />
  </Ico>
);
const IcoTable = () => (
  <Ico w={14}>
    <rect x="0.500" y="1.500" width="12.500" height="12" fill="#fff" stroke="#777f8c" />
    <path d="M.5 4.500H13M.5 7.500H13M.5 10.500H13M4.500 1.500v12M9 1.500v12" stroke="#98a0b0" />
    <path d="M1 2h12v2H1z" fill="#b9c4d6" />
  </Ico>
);
const IcoSpatial = () => (
  <Ico>
    <path d="M0 5.500h9M0 9.500h7M0 13.500h4M12 5.500h4M9 9.500h7M7 13.500h9" stroke="#4a9ad6" />
    <path d="M2 14L14 2" stroke="#222" strokeWidth="2.600" />
    <path d="M2 14L14 2" stroke="#f4ee60" strokeWidth="1.200" strokeDasharray="3 1" />
  </Ico>
);
const IcoImport = () => (
  <Ico>
    <path d="M.5 7.500h3v1.500h-1v3.500h11V9h-1V7.500h3V15H.5z" fill="#8fb0dc" stroke="#3a62a0" strokeWidth="0.900" />
    <path d="M2.500 2l6 6" stroke="#2c5ca0" />
    <path d="M10 9.500V5L5.500 9.500z" fill="#2c6cb0" />
  </Ico>
);
const IcoX = () => (
  <Ico w={14} h={14}>
    <path d="M2 2l9.500 9.500M11.500 2L2 11.500" stroke="#5c5c5c" strokeWidth="4.400" />
    <path d="M2 2l9.500 9.500M11.500 2L2 11.500" stroke="#868686" strokeWidth="2.600" />
  </Ico>
);
const IcoApp = () => (
  <Ico>
    <rect x="0" y="0" width="12" height="10" fill="#7fb8ee" />
    <path d="M1 0h9v6H1z" fill="#bfe0fb" />
    <circle cx="9" cy="9.500" r="5.500" fill="#2c73c8" />
    <path d="M5 7c3-3 5-2 6-1s-1 3-2 3 1 3-1 4-2-3-3-6zM12 8l2 1-1 4z" fill="#5cc24a" />
  </Ico>
);

/* ------------------------------------------------------------------ */
/* Shared bits                                                         */
/* ------------------------------------------------------------------ */

const Dots = () => (
  <div className="h-[22px] w-[2px] shrink-0 bg-[repeating-linear-gradient(180deg,#b4b4b4_0px,#b4b4b4_2px,transparent_2px,transparent_4px)]" />
);

const ArrowV = ({ down = false }: { down?: boolean }) => (
  <svg width="8" height="4" viewBox="0 0 8 4" className="mx-auto block">
    <path d={down ? "M0 0h7L3.500 4z" : "M0 4h7L3.500 0z"} fill="#444" />
  </svg>
);

/* ------------------------------------------------------------------ */
/* Main bars                                                           */
/* ------------------------------------------------------------------ */

function TitleBar() {
  return (
    <div className="flex h-[18px] shrink-0 items-start border-b border-[#1b2733] bg-[linear-gradient(90deg,#0a1a2a_0%,#0d2032_12%,#203447_22%,#1c3042_35%,#1a2c3e_42%,#0d2033_52%,#0b1b2c_70%,#15283a_85%,#0c1a29_100%)] shadow-[inset_0_-1px_0_#98a2ac]">
      <div className="w-[19px]"><IcoApp /></div>
      <span className="pt-px text-[12px] leading-[16px] text-white">uDig</span>
      <div className="mr-[3px] ml-auto flex h-[14px] overflow-hidden rounded-b-[4px] border border-t-0 border-[#8c98a4] text-white">
        <div className="flex w-[25px] items-end justify-center border-r border-[#8c98a4] bg-gradient-to-b from-[#53636f] to-[#15222e] pb-[3px]">
          <div className="h-[4px] w-[11px] border border-[#444] bg-white" />
        </div>
        <div className="flex w-[24px] items-center justify-center border-r border-[#8c98a4] bg-gradient-to-b from-[#53636f] to-[#15222e]">
          <svg width="12" height="10" viewBox="0 0 12 10"><path d="M4 1h6.500v5H8M1.500 3.500H8V9H1.500z" fill="none" stroke="#e8e8e8" strokeWidth="1.600" /></svg>
        </div>
        <div className="flex w-[39px] items-center justify-center bg-gradient-to-b from-[#d08a7c] to-[#a8281a]">
          <svg width="12" height="9" viewBox="0 0 12 9"><path d="M2 1l8 7M10 1L2 8" stroke="#fff" strokeWidth="2.500" /></svg>
        </div>
      </div>
    </div>
  );
}

const menus: [string, string][] = [
  ["File", "w-[32px]"], ["Edit", "w-[34px]"], ["Navigation", "w-[72px]"], ["Horton Machine", "w-[100px]"],
  ["JGrass", "w-[61px]"], ["GRASS", "w-[49px]"], ["Layer", "w-[42px]"], ["Map", "w-[38px]"],
  ["Data", "w-[38px]"], ["Window", "w-[58px]"], ["Help", "w-[40px]"],
];

function MenuBar() {
  return (
    <div className="flex h-[19px] shrink-0 items-start border-b border-[#b6bccb] bg-[linear-gradient(180deg,#ffffff_0px,#eef1f8_7px,#d5dbed_8px,#e0e5f3_18px)] pl-[5px] tracking-[-0.2px]">
      {menus.map(([m, w]) => (
        <span key={m} className={`${w} pt-[2px] leading-[16px]`}>{m}</span>
      ))}
    </div>
  );
}

const toolItems: [string, React.ReactNode][] = [
  ["w-[12px]", <Dots />], ["w-[22px]", <IcoNew />], ["w-[15px]", <Caret />], ["w-[24px]", <IcoSave />], ["w-[26px]", <IcoSaveAll />],
  ["w-[10px]", <Dots />], ["w-[28px]", <IcoWizard />], ["w-[10px]", <Dots />],
  ["w-[23px]", <IcoAnt1 />], ["w-[23px]", <IcoAnt2 />], ["w-[23px]", <IcoAnt3 />], ["w-[23px]", <IcoAnt4 />], ["w-[23px]", <IcoAnt5 />], ["w-[28px]", <IcoAnt6 />],
  ["w-[9px]", <Dots />], ["w-[23px]", <IcoBack />], ["w-[23px]", <IcoBack flip />], ["w-[23px]", <IcoRefresh />], ["w-[23px]", <IcoDelete />],
  ["w-[23px]", <IcoExtent />], ["w-[23px]", <IcoZoom plus />], ["w-[23px]", <IcoZoom plus={false} />], ["w-[23px]", <IcoZoomBox />], ["w-[26px]", <IcoConsole />],
  ["w-[20px]", <IcoTag />], ["w-[28px]", <IcoEraser />], ["w-[11px]", <Dots />],
];

const dropTools: React.ReactNode[] = [
  <IcoMag />, <IcoPan />, <IcoSelect />, <div className="pl-[4px]"><IcoInfo /></div>, <IcoEdit />, <IcoPoly />, <IcoPolyDel />, <IcoBrush />, <IcoPins />, <IcoGreen />,
];

function ToolBar() {
  return (
    <div className="flex h-[27px] shrink-0 items-center pl-[4px]">
      {toolItems.map(([w, icon], i) => (
        <div key={i} className={`${w} shrink-0`}>{icon}</div>
      ))}
      {dropTools.map((icon, i) => (
        <div key={i} className={`-ml-[4px] flex h-[20px] w-[42px] shrink-0 items-center rounded-[3px] border pl-[4px] ${i === 7 ? "z-10 mr-[4px] !w-[38px] border-[#d8d8d8] bg-[#f6f6f6]" : "border-transparent"}`}>
          <div className="w-[23px] shrink-0">{icon}</div>
          <Caret />
        </div>
      ))}
    </div>
  );
}

/* ------------------------------------------------------------------ */
/* Left column                                                         */
/* ------------------------------------------------------------------ */

const projectMaps = ["111th Congress", "boston", "counties", "Map", "Map 2", "Map 3", "Map 4", "Map 5", "Map 6", "OSM"];

function ProjectsPanel() {
  return (
    <section className="flex h-[231px] shrink-0 flex-col rounded-t-[4px] border border-[#9a9a9a] bg-white">
      <div className="flex h-[23px] shrink-0 rounded-t-[4px] bg-[#efefef]">
        <div className="flex w-[91px] shrink-0 items-center rounded-tl-[4px] rounded-tr-[3px] border-r border-[#9a9a9a] bg-white pl-[3px]">
          <IcoProject />
          <span className="w-[53px] shrink-0 pl-[3px]">Projects</span>
          <IcoClose />
        </div>
        <div className="flex grow items-start justify-end border-b border-[#9a9a9a] pr-[5px]">
          <div className="mt-[3px] mr-[6px]"><IcoLink /></div>
          <div className="mt-[4px] mr-[9px]"><IcoMenuTri /></div>
          <div className="mt-[4px] mr-[8px]"><IcoMin /></div>
          <div className="mt-[4px]"><IcoMax /></div>
        </div>
      </div>
      <div className="mx-[2px] mt-[2px] flex h-[202px] overflow-hidden">
        <div className="grow overflow-hidden">
          <div className="flex h-[18px] items-center pl-[22px]">
            <IcoProject />
            <span className="pl-[5px]">project</span>
          </div>
          {projectMaps.map((m) => (
            <div key={m} className="flex h-[18px] items-center pl-[39px]">
              <div className={`flex h-[18px] items-center rounded-[3px] border pr-[4px] pl-[3px] ${m === "Map 6" ? "border-[#d9d9d9] bg-gradient-to-b from-[#fafafa] to-[#e9e9e9]" : "border-transparent"}`}>
                <IcoMap />
                <span className="pl-[5px]">{m}</span>
              </div>
            </div>
          ))}
          <div className="mt-[3px] ml-[43px] h-[14px] w-[13px] bg-[#545b66]" />
        </div>
        <div className="flex w-[16px] shrink-0 flex-col bg-[#efefef]">
          <div className="h-[18px] pt-[7px]"><ArrowV /></div>
          <div className="flex h-[121px] items-center justify-center rounded-[2px] border border-[#959595] bg-gradient-to-r from-[#f4f4f4] to-[#cfcfd2]">
            <div className="h-[8px] w-[8px] bg-[repeating-linear-gradient(180deg,#666_0px,#666_1px,#fff_1px,#ddd_3px)]" />
          </div>
          <div className="mt-auto pb-[7px]"><ArrowV down /></div>
        </div>
      </div>
    </section>
  );
}

const layers = [
  { name: "110m_ocean", fill: "#ebae80", line: "#d4641a", sel: false },
  { name: "110m_land", fill: "#8dceba", line: "#2f9f74", sel: true },
];

function LayersPanel() {
  return (
    <section className="flex min-h-0 grow flex-col rounded-t-[4px] border border-[#9a9a9a] bg-white">
      <div className="flex h-[23px] shrink-0 rounded-t-[4px] bg-[#efefef]">
        <div className="flex w-[82px] shrink-0 items-center rounded-tl-[4px] rounded-tr-[3px] border-r border-[#9a9a9a] bg-white pl-[4px]">
          <IcoLayers />
          <span className="w-[44px] shrink-0 pl-[3px]">Layers</span>
          <IcoClose />
        </div>
        <div className="flex w-[87px] shrink-0 items-center border-r border-b border-[#9a9a9a] pl-[5px]">
          <IcoBookmarks />
          <span className="pt-px pl-[3px]">Bookmarks</span>
        </div>
        <div className="flex grow items-start justify-end border-b border-[#9a9a9a] pr-[5px]">
          <div className="mt-[4px] mr-[8px]"><IcoMin /></div>
          <div className="mt-[4px]"><IcoMax /></div>
        </div>
      </div>
      <div className="mx-[2px] flex h-[26px] shrink-0 items-center justify-end border-b border-[#9a9a9a] bg-white pr-[4px]">
        <div className="mr-[10px]"><IcoUp /></div>
        <div className="mr-[8px]"><IcoUp down /></div>
        <div className="mr-[8px] h-[18px] w-px bg-[#888]" />
        <div className="mr-[7px]"><IcoPalette /></div>
        <div className="mr-[7px]"><IcoTriangle /></div>
        <IcoZoomLayer />
      </div>
      {layers.map((l) => (
        <div key={l.name} className="flex h-[18px] items-center pl-[26px]">
          <div className="flex h-[13px] w-[13px] items-center justify-center border border-[#8f9296] bg-[#e2e5ea]">
            <svg width="9" height="9" viewBox="0 0 9 9"><path d="M1 4l2.500 4L8 .5" fill="none" stroke="#3a4a9c" strokeWidth="2" /></svg>
          </div>
          <div className={`ml-[2px] flex h-[18px] items-center rounded-[3px] border pr-[3px] pl-px ${l.sel ? "border-[#d9d9d9] bg-gradient-to-b from-[#fafafa] to-[#e9e9e9]" : "border-transparent"}`}>
            <svg width="15" height="14" viewBox="0 0 15 14"><path d="M1 13.500C2 8 3 3 14 1v12.500z" fill={l.fill} stroke={l.line} strokeWidth="1.300" /></svg>
            <span className="pl-[4px]">{l.name}</span>
          </div>
        </div>
      ))}
    </section>
  );
}

/* ------------------------------------------------------------------ */
/* Editor and catalog                                                  */
/* ------------------------------------------------------------------ */

function Editor() {
  return (
    <section className="flex h-[678px] shrink-0 flex-col rounded-t-[4px] border border-[#9a9a9a] bg-white">
      <div className="flex h-[23px] shrink-0 rounded-t-[4px] bg-[#efefef]">
        {["Map 4", "Map 5"].map((t) => (
          <div key={t} className="flex w-[83px] shrink-0 items-center border-r border-b border-[#9a9a9a] pl-[5px]">
            <IcoMap />
            <span className="pt-px pl-[4px]">{t}</span>
          </div>
        ))}
        <div className="flex w-[82px] shrink-0 items-center rounded-tr-[3px] border-r border-[#9a9a9a] bg-white pl-[5px]">
          <IcoMap />
          <span className="w-[44px] shrink-0 pt-px pl-[4px]">Map 6</span>
          <IcoClose />
        </div>
        <div className="flex grow items-start justify-end border-b border-[#9a9a9a] pr-[5px]">
          <div className="mt-[4px] mr-[8px]"><IcoMin /></div>
          <div className="mt-[4px]"><IcoMax /></div>
        </div>
      </div>
      <div className="mt-[2px] ml-[83px]"><WorldMap /></div>
      <div className="mr-[2px] ml-px flex h-[24px] items-center border border-[#a5a5a5] bg-[#efefef] p-px tracking-[-0.1px] [&>div]:pt-[2px]">
        <div className="h-[20px] grow border-r border-[#8f8f8f]" />
        <div className="mx-[4px] flex h-[20px] w-[91px] items-center justify-center rounded-[2px] border border-[#e2e6ea] bg-white">1:121,171,704</div>
        <div className="h-[20px] w-px bg-[#8f8f8f]" />
        <div className="mx-[4px] flex h-[19px] w-[130px] items-center justify-center rounded-[3px] border border-[#707070] bg-[linear-gradient(180deg,#f2f2f2_0%,#ebebeb_48%,#dadada_52%,#cfcfcf_100%)]">WGS 84</div>
        <div className="h-[20px] w-px bg-[#8f8f8f]" />
        <div className="ml-[4px] flex h-[20px] w-[161px] items-center justify-center rounded-[2px] border border-[#e2e6ea] bg-white">-3, 90</div>
      </div>
    </section>
  );
}

const catalogTabs: { label: string; w: string; icon: React.ReactNode; tw: string }[] = [
  { label: "Web", w: "w-[52px]", icon: <IcoWindow />, tw: "pl-[5px]" },
  { label: "Search", w: "w-[63px]", icon: <IcoTorch />, tw: "pl-[3px]" },
  { label: "Table", w: "w-[57px]", icon: <IcoTable />, tw: "pl-[5px]" },
  { label: "Information", w: "w-[91px]", icon: <div className="pl-[3px]"><IcoInfo /></div>, tw: "pl-[5px]" },
  { label: "Console", w: "w-[71px]", icon: <IcoConsole />, tw: "pl-[3px]" },
  { label: "Spatial Operations", w: "w-[124px]", icon: <IcoSpatial />, tw: "pl-[3px]" },
  { label: "Progress View", w: "w-[101px]", icon: <IcoWindow />, tw: "pl-[5px]" },
];

const catalogRows = [
  "110m_admin_1_states_provinces_lines_shp", "110m_admin_1_states_provinces_shp", "110m_geography_marine_polys",
  "110m_geography_regions_elevation_points", "110m_geography_regions_points", "110m_geography_regions_polys",
  "110m_glaciated_areas", "110m_lakes", "110m_land", "110m_ocean", "110m_physical_geographic_lines", "110m_populated_places",
];

function Catalog() {
  return (
    <section className="flex min-h-0 grow flex-col rounded-t-[4px] border border-[#9a9a9a] bg-[#99b4d1]">
      <div className="flex h-[23px] shrink-0 rounded-t-[4px] bg-[#efefef]">
        <div className="flex w-[90px] shrink-0 items-center rounded-tl-[4px] rounded-tr-[3px] border-r border-[#9a9a9a] bg-gradient-to-b from-[#d5dfeb] to-[#99b4d1] pl-[3px]">
          <IcoCatalog />
          <span className="w-[53px] shrink-0 pt-px pl-[4px]">Catalog</span>
          <IcoClose />
        </div>
        {catalogTabs.map((t) => (
          <div key={t.label} className={`${t.w} flex shrink-0 items-center border-r border-b border-[#9a9a9a] pl-[5px] whitespace-nowrap`}>
            {t.icon}
            <span className={`${t.tw} pt-px`}>{t.label}</span>
          </div>
        ))}
        <div className="flex grow items-start justify-end border-b border-[#9a9a9a] pr-[5px]">
          <div className="mt-[3px] mr-[9px]"><IcoImport /></div>
          <div className="mt-[4px] mr-[8px]"><IcoX /></div>
          <div className="mt-[4px] mr-[9px]"><IcoMenuTri /></div>
          <div className="mt-[4px] mr-[8px]"><IcoMin /></div>
          <div className="mt-[4px]"><IcoMax /></div>
        </div>
      </div>
      <div className="mx-[2px] mt-[2px] mb-[2px] flex min-h-0 grow overflow-hidden border border-[#848c98] bg-white">
        <div className="min-w-0 grow pt-px">
          {catalogRows.map((r) => {
            const sel = r === "110m_land" || r === "110m_ocean";
            return (
              <div key={r} className="flex h-[18px] items-center pl-[30px]">
                <svg width="7" height="9" viewBox="0 0 7 9" className="mt-[3px] block"><path d="M1 .8l4.200 3.700L1 8.200z" fill="#fff" stroke="#d2d2d2" /></svg>
                <div className={`ml-[3px] flex h-[18px] items-center rounded-[3px] border pr-[3px] pl-[4px] ${sel ? "border-[#8fd6f8] bg-gradient-to-b from-[#eef9ff] to-[#d6effc]" : "border-transparent"}`}>
                  <IcoShp />
                  <span className="pl-[5px]">{r}</span>
                </div>
              </div>
            );
          })}
        </div>
        <div className="mr-px flex w-[16px] shrink-0 flex-col bg-[#efefef]">
          <div className="h-[156px] pt-[8px]"><ArrowV /></div>
          <div className="h-[15px] rounded-[2px] border border-[#959595] bg-gradient-to-r from-[#f6f6f6] to-[#cfcfd2]" />
          <div className="mt-auto pb-[8px]"><ArrowV down /></div>
        </div>
      </div>
    </section>
  );
}

export default function App() {
  return (
    <div className="flex h-[1017px] w-[1677px] flex-col overflow-hidden bg-[#f0f0f0] font-['Open_Sans','Noto_Sans',sans-serif] text-[12px] leading-[16px] tracking-[-0.33px] whitespace-nowrap text-black">
      <TitleBar />
      <MenuBar />
      <ToolBar />
      <div className="flex h-[928px] shrink-0">
        <aside className="mr-[3px] ml-[2px] flex w-[250px] shrink-0 flex-col gap-[3px]">
          <ProjectsPanel />
          <LayersPanel />
        </aside>
        <main className="flex w-[1419px] shrink-0 flex-col gap-[3px]">
          <Editor />
          <Catalog />
        </main>
      </div>
      <footer className="flex h-[25px] shrink-0 items-start overflow-hidden pt-[4px] pl-[5px]">
        <Dots />
        <div className="ml-[12px] flex flex-col items-center">
          <svg width="16" height="16" viewBox="0 0 16 16" className="ml-[2px] block">
            <rect x="0.500" y="3.500" width="8" height="9" fill="#fff" stroke="#8a7a4a" />
            <path d="M1 4h7v2H1z" fill="#3d7fc4" />
            <path d="M12 2.500v6M9 5.500h6" stroke="#c69a2c" strokeWidth="1.800" />
          </svg>
          <div className="mt-[2px] h-[12px] w-[26px] rounded-full border border-[#7aa8cc] bg-[#dcecf8]" />
        </div>
        <div className="mr-[291px] ml-auto"><Dots /></div>
      </footer>
    </div>
  );
}
